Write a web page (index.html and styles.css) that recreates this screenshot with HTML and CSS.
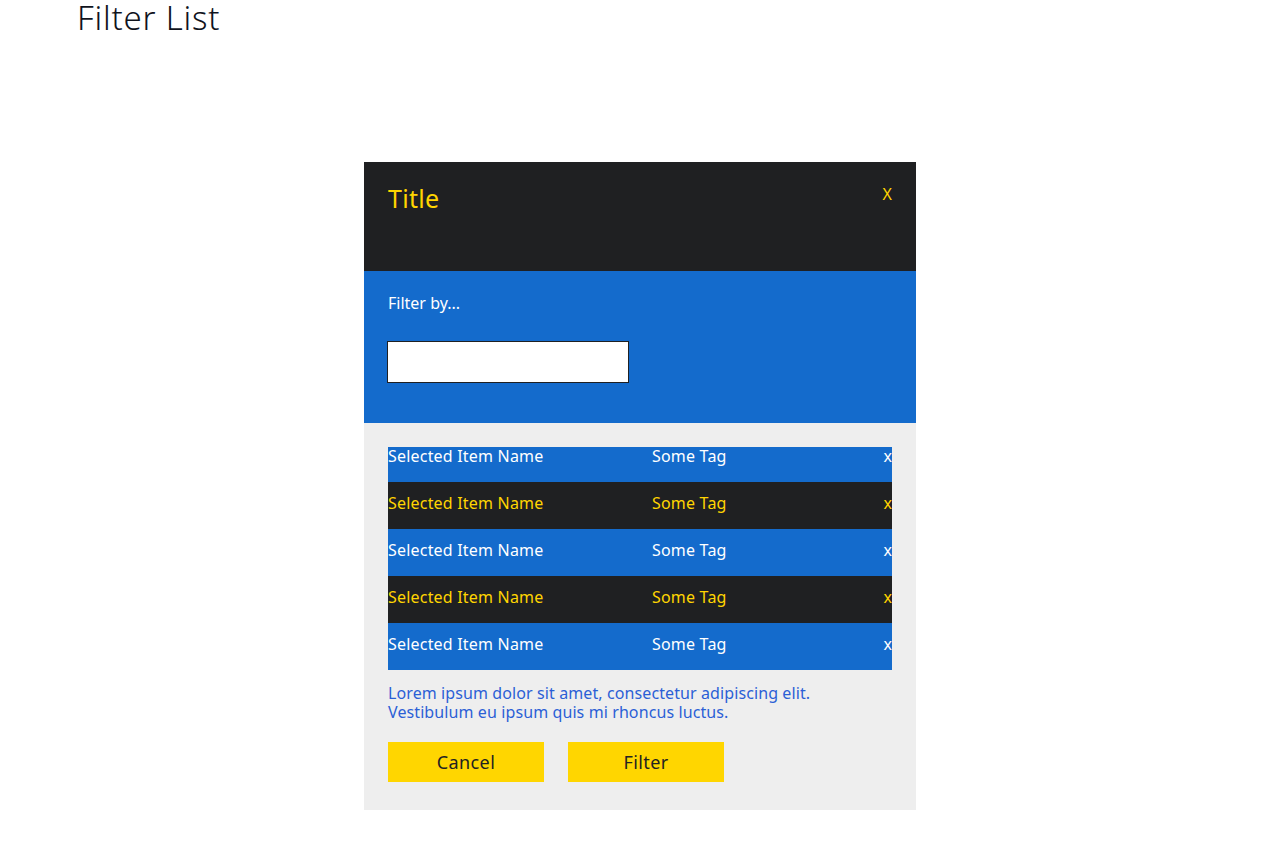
FILE: index.html
```html
<!DOCTYPE html>
<html lang="en">
<head>
<meta charset="utf-8">
<title>Filter List</title>
<link rel="stylesheet" href="styles.css">
</head>
<body>
<main class="page">
  <h1 class="page-title">Filter List</h1>
  <section class="modal">
    <header class="modal-header">
      <h2 class="modal-title">Title</h2>
      <span class="modal-close">X</span>
    </header>
    <div class="modal-filter">
      <label class="filter-label" for="filter">Filter by...</label>
      <input class="filter-input" id="filter" type="text">
    </div>
    <div class="modal-body">
      <ul class="item-list">
        <li class="item item-blue"><span class="item-name">Selected Item Name</span><span class="item-tag">Some Tag</span><span class="item-remove">x</span></li>
        <li class="item item-dark"><span class="item-name">Selected Item Name</span><span class="item-tag">Some Tag</span><span class="item-remove">x</span></li>
        <li class="item item-blue"><span class="item-name">Selected Item Name</span><span class="item-tag">Some Tag</span><span class="item-remove">x</span></li>
        <li class="item item-dark"><span class="item-name">Selected Item Name</span><span class="item-tag">Some Tag</span><span class="item-remove">x</span></li>
        <li class="item item-blue"><span class="item-name">Selected Item Name</span><span class="item-tag">Some Tag</span><span class="item-remove">x</span></li>
      </ul>
      <p class="note">Lorem ipsum dolor sit amet, consectetur adipiscing elit.<br>Vestibulum eu ipsum quis mi rhoncus luctus.</p>
      <div class="actions">
        <button class="btn" type="button">Cancel</button>
        <button class="btn" type="button">Filter</button>
      </div>
    </div>
  </section>
</main>
</body>
</html>
```
FILE: styles.css
```css
* { box-sizing: border-box; }
html, body { margin: 0; padding: 0; background: #ffffff; }
body { font-family: "Noto Sans", "Open Sans", sans-serif; color: #1f2022; }
.page { padding: 0 0 40px 77px; }
.page-title {
  margin: 0;
  font-size: 33px;
  font-weight: 300;
  letter-spacing: 0.8px;
  line-height: 36px;
  color: #10131c;
}
.modal {
  width: 552px;
  margin: 126px 0 0 287px;
}
.modal-header {
  background: #1f2022;
  height: 109px;
  padding: 20px 24px;
  display: flex;
  justify-content: space-between;
  align-items: flex-start;
}
.modal-title {
  margin: 0;
  font-size: 25px;
  font-weight: 400;
  letter-spacing: 0.3px;
  line-height: 32px;
  color: #ffd500;
}
.modal-close {
  color: #ffd500;
  font-size: 16px;
  line-height: 20px;
  margin-top: 2px;
  margin-right: 0;
}
.modal-filter {
  background: #146bcc;
  height: 152px;
  padding: 22px 24px;
  display: flex;
  flex-direction: column;
  align-items: flex-start;
}
.filter-label {
  color: #ffffff;
  font-size: 16px;
  line-height: 20px;
}
.filter-input {
  margin-top: 28px;
  width: 242px;
  height: 42px;
  margin-left: -1px;
  border: 1px solid #1f2022;
  background: #ffffff;
  border-radius: 0;
  padding: 0 6px;
  font: inherit;
}
.modal-body {
  background: #eeeeee;
  padding: 24px 24px 28px;
}
.item-list {
  list-style: none;
  margin: 0;
  padding: 0;
}
.item {
  display: grid;
  grid-template-columns: 264px 1fr auto;
  font-size: 16px;
  letter-spacing: 0.2px;
  line-height: 18px;
  padding-bottom: 17px;
}
.item + .item { padding-top: 12px; }
.item-blue { background: #146bcc; color: #ffffff; }
.item-dark { background: #1f2022; color: #ffd500; }
.item-remove { text-align: right; letter-spacing: 0; }
.note {
  margin: 14px 0 0;
  color: #2b5fd6;
  font-size: 16px;
  letter-spacing: 0.1px;
  line-height: 19px;
}
.actions {
  display: flex;
  gap: 24px;
  margin-top: 20px;
}
.btn {
  width: 156px;
  height: 40px;
  border: none;
  border-radius: 0;
  background: #ffd600;
  color: #222222;
  font: inherit;
  font-size: 18px;
  letter-spacing: 0.4px;
  cursor: pointer;
}
```
